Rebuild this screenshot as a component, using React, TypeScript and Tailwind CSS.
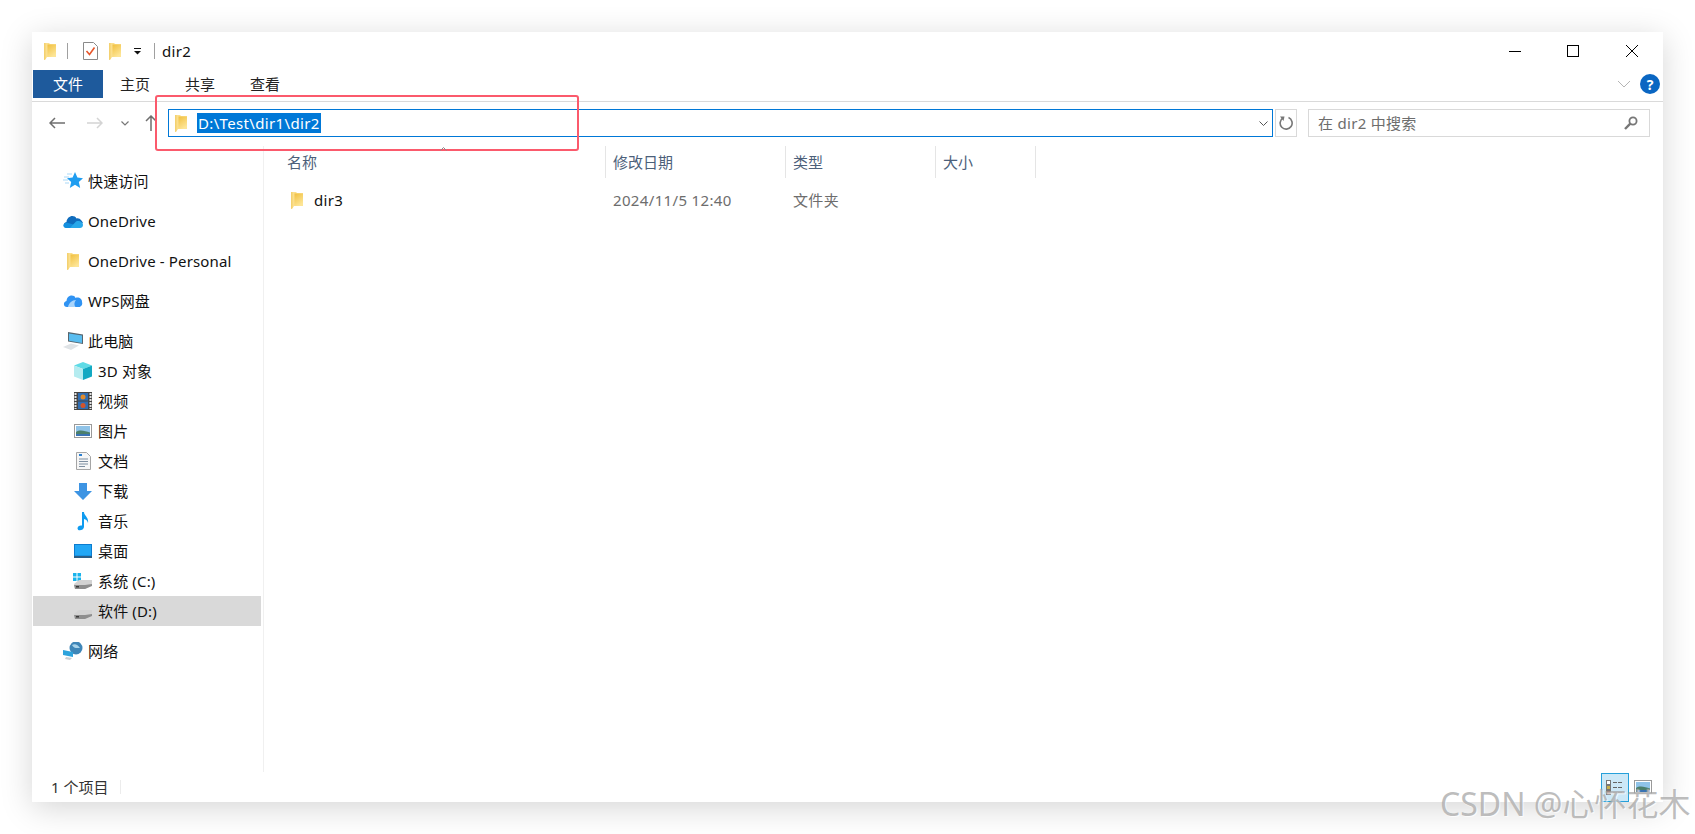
import type { ReactNode } from "react";

const Folder = ({ className = "" }: { className?: string }) => (
  <svg viewBox="0 0 12 18" className={`w-[12px] h-[18px] shrink-0 ${className}`}>
    <defs>
      <linearGradient id="folderBody" x1="0" y1="0" x2="0.5" y2="1">
        <stop offset="0" stopColor="#f1c040" />
        <stop offset="1" stopColor="#fde596" />
      </linearGradient>
    </defs>
    <path d="M0 1 H5 L6 2 H12 V15 H3 L1 18 H0 Z" fill="#fbdf8d" />
    <path d="M3.5 2.5 H12 V15 H3.5 Z" fill="url(#folderBody)" />
    <path d="M0 1 H1.5 V17 L0 18 Z" fill="#f4d170" />
  </svg>
);

const Star = () => (
  <svg viewBox="0 0 20 18" className="w-[20px] h-[18px]">
    <path d="M12 0 L14.4 5.6 L20 6.2 L15.8 10 L17.2 16 L12 12.8 L6.8 16 L8.2 10 L4 6.2 L9.6 5.6 Z" fill="#1f9df0" />
    <path d="M4 2 H9 M1 5 H6 M0 8 H5 M2 11 H6" stroke="#a9d8f7" strokeWidth="1" />
  </svg>
);

const OneDriveIcon = () => (
  <svg viewBox="0 0 20 14" className="w-[20px] h-[14px]">
    <path d="M3 13.5 C0 13.5 0 8.5 3.5 8 C4 2 11 0 13.5 4.5 C17 3.5 19.5 8 20 9 L9 13.5 Z" fill="#0f6cbd" />
    <path d="M3 14 C0 14 -1 9.5 3.5 8.5 L12 11 L17 14 Z" fill="#1490df" />
    <path d="M7 14 L13 7.5 C16 6 20 8 20 11 C20 13 18.5 14 17 14 Z" fill="#28a8ea" />
  </svg>
);

const WpsCloud = () => (
  <svg viewBox="0 0 20 14" className="w-[20px] h-[14px]">
    <path d="M4 13 C0 13 0 7.5 3.5 7 C4 1 11 0 12.5 4 C15 2.5 19.5 4.5 19 8 C20 10.5 18 13 16 13 Z" fill="#2f93f3" />
    <path d="M5 13 C6 9 9 6 13 6 C11 8.5 11 11 12.5 13 Z" fill="#a9d4fb" />
  </svg>
);

const Computer = () => (
  <svg viewBox="0 0 20 18" className="w-[20px] h-[18px]">
    <path d="M5 0 L20 2.5 V12 L5 9.5 Z" fill="#56656f" />
    <path d="M6 1.4 L19 3.5 V11 L6 8.8 Z" fill="#59bdf0" />
    <path d="M0 15 L8 11.5 L16 13.5 L8 18 Z" fill="#dfe3e6" />
  </svg>
);

const Cube = () => (
  <svg viewBox="0 0 18 18" className="w-[18px] h-[18px]">
    <path d="M9 0 L18 3.5 L9 7 L0 3.5 Z" fill="#5fdbe6" />
    <path d="M0 3.5 L9 7 V18 L0 14.5 Z" fill="#b5ecf0" />
    <path d="M18 3.5 L9 7 V18 L18 14.5 Z" fill="#13a9c2" />
  </svg>
);

const Film = () => (
  <svg viewBox="0 0 18 18" className="w-[18px] h-[18px]">
    <rect width="18" height="18" fill="#454545" />
    <path d="M1.5 1 V17 M16.5 1 V17" stroke="#e4e4e4" strokeWidth="2" strokeDasharray="2 1" />
    <rect x="4" y="1" width="10" height="7.5" fill="#2f6db3" />
    <rect x="4" y="9.5" width="10" height="7.5" fill="#2f6db3" />
    <circle cx="9" cy="5" r="2.5" fill="#e08b2d" />
    <circle cx="9" cy="13.5" r="2.5" fill="#d2542b" />
  </svg>
);

const Picture = ({ className = "w-[18px] h-[14px]" }: { className?: string }) => (
  <svg viewBox="0 0 18 14" className={className}>
    <rect x="0.5" y="0.5" width="17" height="13" fill="#fff" stroke="#9a9a9a" />
    <rect x="2" y="2" width="14" height="10" fill="#8fc3e8" />
    <path d="M2 8 C6 5 11 7 16 8.5 V12 H2 Z" fill="#4b7f6b" />
    <path d="M2 10 H16 V12 H2 Z" fill="#3a73b3" />
  </svg>
);

const Doc = () => (
  <svg viewBox="0 0 15 18" className="w-[15px] h-[18px]">
    <path d="M0.5 0.5 H10.5 L14.5 4.5 V17.5 H0.5 Z" fill="#f6f6f6" stroke="#a5a5a5" />
    <path d="M3 3 H6" stroke="#2a7fd0" strokeWidth="2" />
    <path d="M3 7 H12 M3 9.5 H12 M3 12 H12 M3 14.5 H9" stroke="#7d8ea0" />
  </svg>
);

const Download = () => (
  <svg viewBox="0 0 18 17" className="w-[18px] h-[17px]">
    <path d="M5 0 H13 V8 H18 L9 17 L0 8 H5 Z" fill="#3d94e3" />
  </svg>
);

const Note = () => (
  <svg viewBox="0 0 12 19" className="w-[12px] h-[19px]">
    <path d="M5 0 H7 C7 4 12 5 11 11 C10.5 8.5 9 7.5 7 7 V15 C7 18 1 20 0.5 16.5 C0.5 14 3 13 5 13.6 Z" fill="#0f9bf0" />
  </svg>
);

const Desktop = () => (
  <svg viewBox="0 0 18 14" className="w-[18px] h-[14px]">
    <rect width="18" height="13" fill="#0c7ccf" />
    <rect x="1" y="1" width="16" height="10.5" fill="#22a7f5" />
    <rect y="12" width="18" height="2" fill="#2b5d85" />
  </svg>
);

const Drive = ({ win = false }: { win?: boolean }) => (
  <svg viewBox="0 0 20 16" className="w-[20px] h-[16px]">
    {win && (
      <g fill="#19b4ec">
        <rect x="0" y="0" width="3.5" height="3.5" />
        <rect x="4.5" y="0" width="3.5" height="3.5" />
        <rect x="0" y="4.5" width="3.5" height="3.5" />
        <rect x="4.5" y="4.5" width="3.5" height="3.5" />
      </g>
    )}
    <path d="M1 11 L6 7 H19 V12 L12 16 H2 Z" fill="#d3d3d3" />
    <path d="M1 12 H12 L19 11 V13 L12 16 H2 Z" fill="#8e8e8e" />
    <rect x="3" y="13" width="3" height="1.5" fill="#3a3a3a" />
  </svg>
);

const Network = () => (
  <svg viewBox="0 0 20 18" className="w-[20px] h-[18px]">
    <circle cx="13" cy="6" r="6.5" fill="#3e86b8" />
    <path d="M9 3 C12 1 15 3 17 6 C14 6 11 7 9 3 Z" fill="#a8d3ea" />
    <path d="M0 8 L10 10 V15 L0 13 Z" fill="#2da3dc" />
    <path d="M3 15 L9 16 L7 18 L2 17 Z" fill="#c9ced2" />
  </svg>
);

const NavItem = ({ icon, label, child = false, active = false }: { icon: ReactNode; label: string; child?: boolean; active?: boolean }) => (
  <div className={`h-[30px] ml-[1px] mr-[2px] flex items-center ${child ? "pl-[40px]" : "pl-[30px]"} ${active ? "bg-[#d9d9d9]" : ""}`}>
    <div className="w-[20px] flex justify-center shrink-0">{icon}</div>
    <span className="ml-[5px] text-[15px] tracking-[0.15px] text-[#111] whitespace-nowrap">{label}</span>
  </div>
);

const columns = [
  { label: "名称", width: "w-[342px]", pad: "pl-[23px]" },
  { label: "修改日期", width: "w-[180px]", pad: "pl-[7px]" },
  { label: "类型", width: "w-[150px]", pad: "pl-[7px]" },
  { label: "大小", width: "w-[100px]", pad: "pl-[7px]" },
];

const thisPc = [
  { icon: <Cube />, label: "3D 对象" },
  { icon: <Film />, label: "视频" },
  { icon: <Picture />, label: "图片" },
  { icon: <Doc />, label: "文档" },
  { icon: <Download />, label: "下载" },
  { icon: <Note />, label: "音乐" },
  { icon: <Desktop />, label: "桌面" },
  { icon: <Drive win />, label: "系统 (C:)" },
];

export default function App() {
  return (
    <div className="relative w-[1695px] h-[834px] overflow-hidden bg-white pt-[32px] pl-[32px] font-['Noto_Sans','Noto_Sans_CJK_SC',sans-serif]">
      <div className="relative w-[1631px] h-[770px] bg-white flex flex-col shadow-[0_6px_30px_rgba(0,0,0,0.17)]">
        {/* title bar */}
        <div className="h-[38px] flex items-center shrink-0 pl-[12px]">
          <Folder />
          <div className="ml-[11px] w-px h-[16px] bg-[#a0a0a0]" />
          <svg viewBox="0 0 15 18" className="ml-[15px] w-[15px] h-[18px]">
            <path d="M0.5 0.5 H10.5 L14.5 4.5 V17.5 H0.5 Z" fill="#fff" stroke="#8a8a8a" />
            <path d="M3.5 9 L6.5 12.5 L11.5 5.5" fill="none" stroke="#e8562a" strokeWidth="1.6" />
          </svg>
          <Folder className="ml-[11px]" />
          <svg viewBox="0 0 7 7" className="ml-[13px] w-[7px] h-[7px]">
            <path d="M0 0.5 H7" stroke="#111" />
            <path d="M0 3 H7 L3.5 6.5 Z" fill="#111" />
          </svg>
          <div className="ml-[13px] w-px h-[16px] bg-[#a0a0a0]" />
          <span className="ml-[7px] text-[15px] tracking-[0.3px] text-[#111]">dir2</span>
          <div className="ml-auto flex items-center">
            <div className="w-[12px] h-px bg-black" />
            <div className="ml-[46px] w-[12px] h-[12px] border border-black" />
            <svg viewBox="0 0 12 12" className="ml-[47px] mr-[25px] w-[12px] h-[12px]">
              <path d="M0 0 L12 12 M12 0 L0 12" stroke="#000" />
            </svg>
          </div>
        </div>
        {/* ribbon tabs */}
        <div className="h-[32px] shrink-0 flex border-b border-[#dadada] pb-[3px] pl-px items-stretch">
          <div className="w-[70px] bg-[#1e5a9c] text-white text-[15px] flex items-center justify-center">文件</div>
          <div className="ml-[17px] w-[30px] text-[15px] text-[#222] flex items-center justify-center">主页</div>
          <div className="ml-[35px] w-[30px] text-[15px] text-[#222] flex items-center justify-center">共享</div>
          <div className="ml-[35px] w-[30px] text-[15px] text-[#222] flex items-center justify-center">查看</div>
          <div className="ml-auto flex items-center pr-[3px]">
            <svg viewBox="0 0 12 6" className="w-[12px] h-[6px]">
              <path d="M0 0 L6 6 L12 0" fill="none" stroke="#b5b5b5" />
            </svg>
            <div className="ml-[10px] w-[20px] h-[20px] rounded-full bg-[#0a66c2] text-white text-[14px] font-bold flex items-center justify-center">?</div>
          </div>
        </div>
        {/* address row */}
        <div className="h-[44px] shrink-0 pt-[7px] pl-[17px] flex items-start">
          <div className="h-[28px] flex items-center">
            <svg viewBox="0 0 16 12" className="w-[16px] h-[12px]">
              <path d="M16 6 H1 M6 1 L1 6 L6 11" fill="none" stroke="#6f6f6f" strokeWidth="1.5" />
            </svg>
            <svg viewBox="0 0 16 12" className="ml-[22px] w-[16px] h-[12px]">
              <path d="M0 6 H15 M10 1 L15 6 L10 11" fill="none" stroke="#d4d4d4" strokeWidth="1.5" />
            </svg>
            <svg viewBox="0 0 8 5" className="ml-[18px] w-[8px] h-[5px]">
              <path d="M0.5 0.5 L4 4 L7.5 0.5" fill="none" stroke="#777" strokeWidth="1.2" />
            </svg>
            <svg viewBox="0 0 12 16" className="ml-[16px] w-[12px] h-[16px]">
              <path d="M6 16 V1 M1 6 L6 1 L11 6" fill="none" stroke="#6f6f6f" strokeWidth="1.5" />
            </svg>
          </div>
          <div className="ml-[11px] w-[1105px] h-[28px] border border-[#0078d7] flex items-center pl-[6px] pr-[4px]">
            <Folder />
            <span className="ml-[10px] h-[20px] px-px bg-[#0078d7] text-white text-[15px] tracking-[0.35px] leading-[20px]">D:\Test\dir1\dir2</span>
            <svg viewBox="0 0 9 5" className="ml-auto w-[9px] h-[5px]">
              <path d="M0.5 0.5 L4.5 4.5 L8.5 0.5" fill="none" stroke="#555" />
            </svg>
          </div>
          <div className="ml-[2px] w-[22px] h-[28px] border border-[#d9d9d9] flex items-center justify-center">
            <svg viewBox="0 0 14 14" className="w-[14px] h-[14px]">
              <path d="M4 2 A6 6 0 1 0 9.5 1.6" fill="none" stroke="#777" strokeWidth="1.6" />
              <path d="M1 0.5 L5.5 0.5 L4.5 5 Z" fill="#777" />
            </svg>
          </div>
          <div className="ml-[11px] w-[342px] h-[28px] border border-[#d9d9d9] flex items-center pl-[9px] pr-[11px]">
            <span className="text-[15px] tracking-[0.3px] text-[#6d6d6d]">在 dir2 中搜索</span>
            <svg viewBox="0 0 14 14" className="ml-auto w-[14px] h-[14px]">
              <circle cx="9" cy="5" r="3.6" fill="none" stroke="#777" strokeWidth="1.8" />
              <path d="M6.3 7.7 L1 13" stroke="#777" strokeWidth="2.4" />
            </svg>
          </div>
        </div>
        {/* body */}
        <div className="flex-1 min-h-0 flex">
          <div className="w-[232px] shrink-0 border-r border-[#f0f0f0] pt-[20px] flex flex-col">
            <NavItem icon={<Star />} label="快速访问" />
            <div className="mt-[10px]"><NavItem icon={<OneDriveIcon />} label="OneDrive" /></div>
            <div className="mt-[10px]"><NavItem icon={<Folder />} label="OneDrive - Personal" /></div>
            <div className="mt-[10px]"><NavItem icon={<WpsCloud />} label="WPS网盘" /></div>
            <div className="mt-[10px]"><NavItem icon={<Computer />} label="此电脑" /></div>
            {thisPc.map((item) => (
              <NavItem key={item.label} icon={item.icon} label={item.label} child />
            ))}
            <NavItem icon={<Drive />} label="软件 (D:)" child active />
            <div className="mt-[10px]"><NavItem icon={<Network />} label="网络" /></div>
          </div>
          <div className="flex-1 min-w-0">
            <div className="h-[32px] flex">
              {columns.map((col) => (
                <div key={col.label} className={`${col.width} ${col.pad} border-r border-[#e5e5e5] flex items-center text-[15px] text-[#4c607a]`}>
                  {col.label}
                </div>
              ))}
            </div>
            <div className="mt-[6px] h-[32px] flex items-center text-[15px] tracking-[0.35px]">
              <div className="w-[342px] pl-[27px] flex items-center">
                <Folder />
                <span className="ml-[11px] text-[#111]">dir3</span>
              </div>
              <div className="w-[180px] pl-[7px] text-[#6d6d6d]">2024/11/5 12:40</div>
              <div className="pl-[7px] text-[#6d6d6d]">文件夹</div>
            </div>
          </div>
        </div>
        {/* status bar */}
        <div className="h-[30px] shrink-0 flex items-center pl-[19px]">
          <span className="text-[15px] text-[#333]">1 个项目</span>
          <div className="ml-[12px] w-px h-[14px] bg-[#ececec]" />
          <div className="ml-auto mr-[11px] flex items-center">
            <div className="w-[28px] h-[29px] bg-[#cce8f7] border border-[#26a0da] flex items-center justify-center">
              <svg viewBox="0 0 18 15" className="w-[18px] h-[15px]">
                <rect x="0.5" y="0.5" width="4" height="4" fill="#fff" stroke="#777" />
                <rect x="0.5" y="5.5" width="4" height="4" fill="#c9b04a" stroke="#777" />
                <rect x="0.5" y="10.5" width="4" height="4" fill="#a5452a" stroke="#777" />
                <path d="M7 2.5 H17 M7 7.5 H17 M7 12.5 H17" stroke="#666" strokeDasharray="4 1" />
              </svg>
            </div>
            <Picture className="ml-[5px] w-[18px] h-[14px]" />
          </div>
        </div>
        {/* red annotation */}
        <div className="absolute left-[123px] top-[63px] w-[424px] h-[56px] border-2 border-[#fb5a6c] rounded-[3px]" />
        {/* column sort caret */}
        <svg viewBox="0 0 7 4" className="absolute left-[408px] top-[115px] w-[7px] h-[4px]">
          <path d="M0.5 3.5 L3.5 0.5 L6.5 3.5" fill="none" stroke="#8a8a8a" />
        </svg>
      </div>
      {/* watermark */}
      <div className="absolute left-[1440px] top-[784px] text-[32px] leading-[40px] text-[#a0a0a0]/70 whitespace-nowrap [text-shadow:1px_1px_1px_rgba(255,255,255,0.8)]">
        CSDN @心怀花木
      </div>
    </div>
  );
}
